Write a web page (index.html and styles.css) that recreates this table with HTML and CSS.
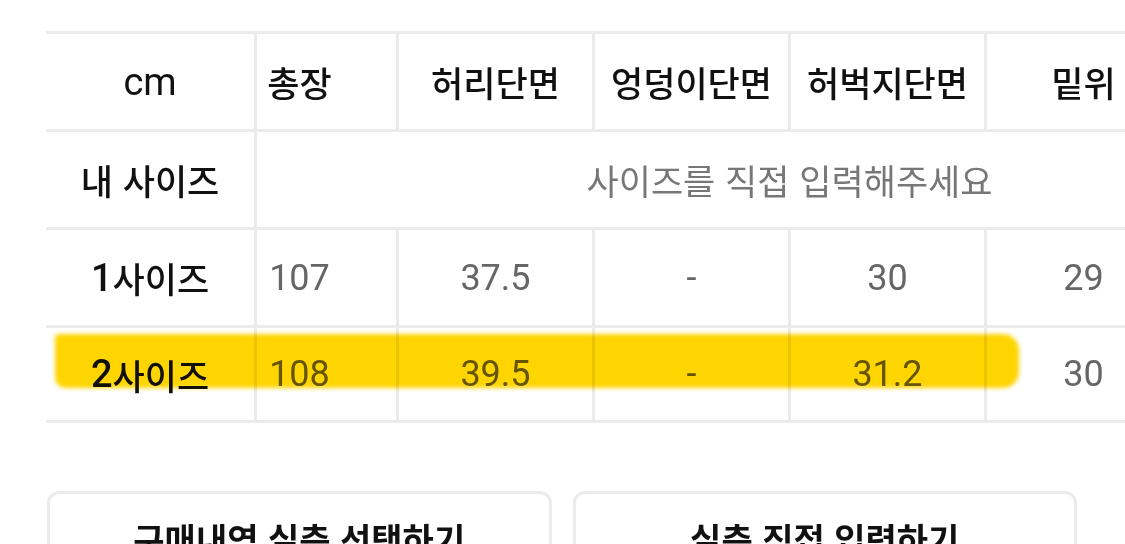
FILE: index.html
```html
<!DOCTYPE html>
<html lang="ko">
<head>
<meta charset="utf-8">
<title>사이즈</title>
<link rel="stylesheet" href="styles.css">
</head>
<body>
<div class="page">
  <div class="size-table">
    <div class="fixed-col">
      <div class="cell head"><span class="latin">cm</span></div>
      <div class="cell head">내 사이즈</div>
      <div class="cell label"><span class="latin">1</span>사이즈</div>
      <div class="cell label last"><span class="latin">2</span>사이즈</div>
    </div>
    <div class="scroll">
      <div class="grid">
        <div class="cell head">총장</div>
        <div class="cell head">허리단면</div>
        <div class="cell head">엉덩이단면</div>
        <div class="cell head">허벅지단면</div>
        <div class="cell head">밑위</div>
        <div class="cell head"></div>

        <div class="cell placeholder span">사이즈를 직접 입력해주세요</div>

        <div class="cell value">107</div>
        <div class="cell value">37.5</div>
        <div class="cell value">-</div>
        <div class="cell value">30</div>
        <div class="cell value">29</div>
        <div class="cell value"></div>

        <div class="cell value last">108</div>
        <div class="cell value last">39.5</div>
        <div class="cell value last">-</div>
        <div class="cell value last">31.2</div>
        <div class="cell value last">30</div>
        <div class="cell value last"></div>
      </div>
    </div>
    <div class="marker"></div>
  </div>

  <div class="actions">
    <button class="action" type="button">구매내역 실측 선택하기</button>
    <button class="action" type="button">실측 직접 입력하기</button>
  </div>
</div>
</body>
</html>
```

FILE: styles.css
```css
html, body {
  margin: 0;
  padding: 0;
  background: #ffffff;
  overflow: hidden;
}

body {
  font-family: "Noto Sans CJK KR", "Noto Sans", sans-serif;
  color: #111111;
}

.page {
  width: 1125px;
}

.size-table {
  position: relative;
  display: flex;
  margin: 31px 0 0 46px;
}

.fixed-col {
  flex: none;
  width: 211px;
  box-sizing: border-box;
  border-right: 3px solid #ebebeb;
  background: #ffffff;
}

.scroll {
  flex: 1;
  min-width: 0;
  overflow: hidden;
}

.grid {
  display: grid;
  grid-template-columns: repeat(6, 196px);
  width: max-content;
  margin-left: -54px;
}

.cell {
  box-sizing: border-box;
  height: 98px;
  border-top: 3px solid #ebebeb;
  display: flex;
  align-items: center;
  justify-content: center;
  font-size: 35px;
  line-height: 1;
  white-space: nowrap;
}

.cell.last {
  border-bottom: 3px solid #ebebeb;
}

.grid .cell {
  border-right: 3px solid #ebebeb;
}

.head {
  color: #111111;
  font-weight: 500;
}

.label {
  color: #111111;
  font-weight: 500;
}

.latin {
  font-family: "Roboto", "Liberation Sans", sans-serif;
  font-size: 38px;
  font-weight: 400;
}

.label .latin {
  font-weight: 500;
}

.span {
  grid-column: 1 / -1;
}

.placeholder {
  color: #777777;
  font-weight: 400;
}

.value {
  font-family: "Roboto", "Liberation Sans", sans-serif;
  font-size: 36px;
  color: #666666;
}

.marker {
  position: absolute;
  left: 9px;
  top: 303px;
  width: 964px;
  height: 54px;
  background: #ffd500;
  border-radius: 4px 16px 16px 10px;
  mix-blend-mode: multiply;
  filter: blur(2px);
  pointer-events: none;
}

.actions {
  display: flex;
  gap: 21px;
  margin: 68px 48px 0 47px;
}

.action {
  flex: 1;
  box-sizing: border-box;
  margin: 0;
  padding: 25px 0 40px;
  border: 3px solid #ebebeb;
  border-radius: 12px;
  background: #ffffff;
  font-family: "Noto Sans CJK KR", "Noto Sans", sans-serif;
  font-size: 34px;
  font-weight: 700;
  line-height: 40px;
  color: #111111;
  text-align: center;
  display: block;
}
```
